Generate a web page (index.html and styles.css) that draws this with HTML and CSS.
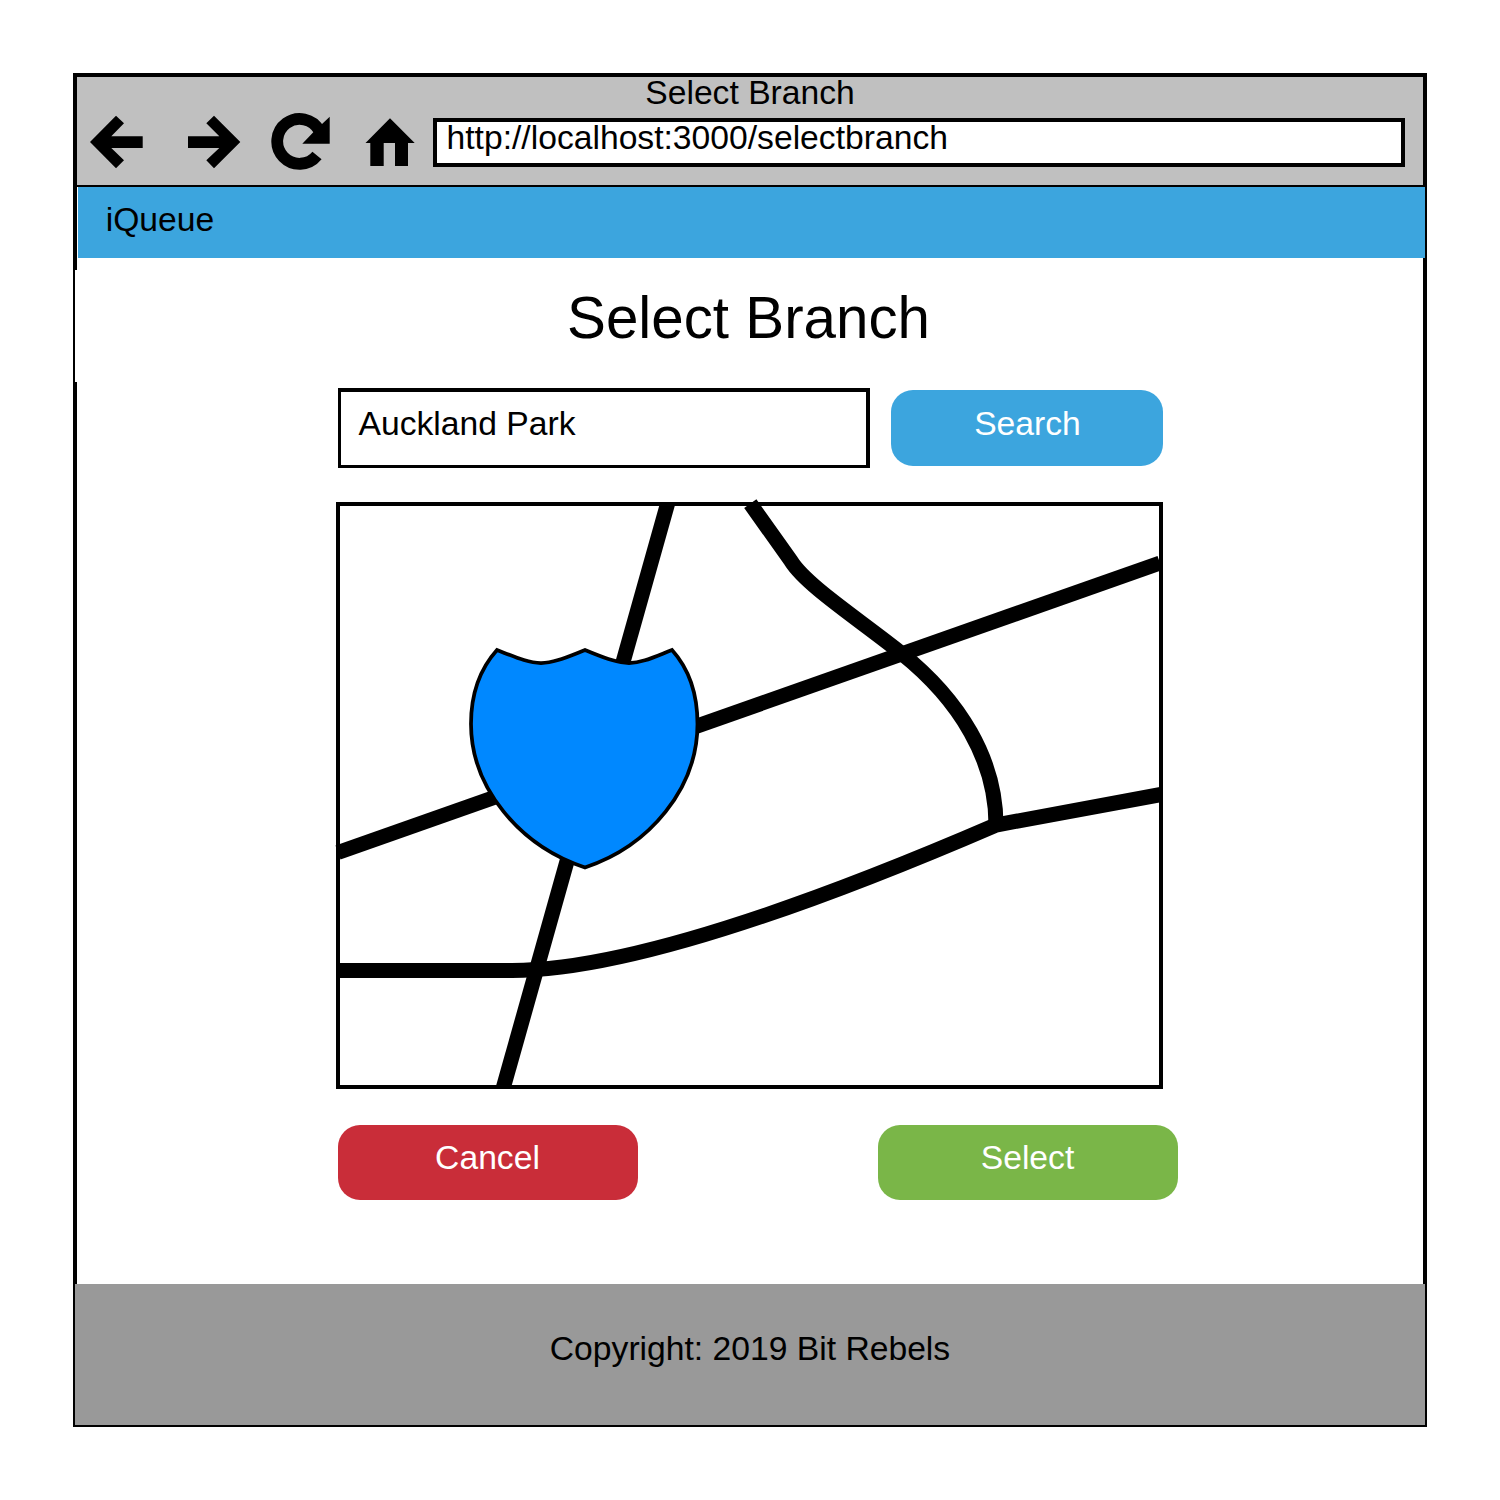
FILE: index.html
```html
<!DOCTYPE html>
<html lang="en">
<head>
<meta charset="utf-8">
<title>Select Branch</title>
<link rel="stylesheet" href="styles.css">
</head>
<body>
<div class="window">
  <header class="chrome">
    <div class="chrome-title">Select Branch</div>
    <div class="toolbar">
      <svg class="icon" width="60" height="60" viewBox="0 0 60 60"><path d="M0 30L26 3.7L34 11.3L21.3 24.3H52.7V36H21.3L34 48.3L26 56.3Z"/></svg>
      <svg class="icon" width="60" height="60" viewBox="0 0 60 60"><path d="M52.3 30L26 3.7L18.3 11.3L31.3 24.3H0V36H31.3L18.3 48.3L26 56.3Z"/></svg>
      <svg class="icon" width="60" height="60" viewBox="0 0 60 60"><path class="ring" d="M48.2 18.5A22.4 22.4 0 1 0 46 43.5"/><path d="M58.7 4.7V31.7H31.3L42.3 20.3L50.5 12.6Z"/></svg>
      <svg class="icon" width="60" height="60" viewBox="0 0 60 60"><path d="M25 6.3L49.7 31H43V54H30V31H18.7V54H5.3V31H0.5Z"/></svg>
      <div class="url">http://localhost:3000/selectbranch</div>
    </div>
  </header>
  <nav class="navbar"><span class="brand">iQueue</span></nav>
  <main class="content">
    <h1 class="heading">Select Branch</h1>
    <div class="search-row">
      <div class="field">Auckland Park</div>
      <div class="button search">Search</div>
    </div>
    <svg class="map" width="827" height="587" viewBox="336 502 827 587">
      <rect class="frame" x="338" y="504" width="823" height="583"/>
      <path class="road" d="M667.5 504L503.5 1087"/>
      <path class="road" d="M338 852.5L1160 563"/>
      <path class="road" d="M338 970.5H512C640 970.5 850 888 996 825L1161 794.5"/>
      <path class="road" d="M750.3 503.7L791 561C806 585 857 618 901 653C960 700 996 760 996 825"/>
      <path class="shield" d="M497 650C515 657 528 663 541 663C554 663 567 657 585 650C603 657 616 663 629 663C642 663 654 657 672 650C690 670 697.5 697 697.5 724C697.5 788 650 846 585 867.5C520 846 471 788 471 724C471 697 479 670 497 650Z"/>
    </svg>
    <div class="actions">
      <div class="button cancel">Cancel</div>
      <div class="button select">Select</div>
    </div>
  </main>
  <footer class="footer">Copyright: 2019 Bit Rebels</footer>
</div>
</body>
</html>
```
FILE: styles.css
```css
* { box-sizing: border-box; }

body {
  margin: 0;
  padding: 73px;
  background: #fff;
  color: #000;
  font: 33.67px/40px "Liberation Sans", Arial, sans-serif;
}

.window {
  width: 1354px;
  height: 1354px;
  display: flex;
  flex-direction: column;
}

.chrome {
  height: 114px;
  border: 4px solid #000;
  border-bottom-width: 2px;
  background: #c0c0c0;
}

.chrome-title {
  height: 30px;
  line-height: 32px;
  text-align: center;
}

.toolbar {
  display: grid;
  grid-template-columns: 98px 83px 94px 68px 972px;
  align-items: start;
  padding: 5px 0 0 13px;
}

.icon { display: block; }

.ring {
  fill: none;
  stroke: #000;
  stroke-width: 11.8;
}

.url {
  height: 49px;
  margin-top: 6px;
  padding-left: 9.5px;
  border: 4px solid #000;
  background: #fff;
  line-height: 32px;
}

.navbar {
  height: 71px;
  padding-left: 1px;
  border-left: 4px solid #000;
  border-right: 2px solid #000;
  background-color: #3ca5de;
  background-clip: content-box;
}

.brand {
  display: block;
  height: 71px;
  padding: 13px 0 0 27.7px;
}

.content {
  height: 1026px;
  padding-top: 12px;
  border: solid #000;
  border-width: 0 4px;
}

.heading {
  height: 112px;
  margin: 0 0 0 -2px;
  padding: 15px 1px 0 0;
  background: #fff;
  font-size: 58.3px;
  font-weight: normal;
  line-height: 66px;
  text-align: center;
}

.search-row {
  display: flex;
  align-items: center;
  gap: 21px;
  margin: 6px 0 34px 261px;
}

.field {
  width: 532px;
  height: 80px;
  padding: 12px 0 0 17.5px;
  border: solid #000;
  border-width: 4px 4px 3px 3px;
}

.button {
  border-radius: 22px;
  color: #fff;
  text-align: center;
}

.search {
  width: 272px;
  height: 76px;
  padding: 14px 0 0 1px;
  background: #3ca5de;
}

.map {
  display: block;
  margin-left: 259px;
  overflow: visible;
}

.frame {
  fill: #fff;
  stroke: #000;
  stroke-width: 4;
}

.road {
  fill: none;
  stroke: #000;
  stroke-width: 15;
}

.shield {
  fill: #08f;
  stroke: #000;
  stroke-width: 3.75;
}

.actions {
  display: flex;
  gap: 240px;
  margin: 36px 0 0 261px;
}

.cancel,
.select {
  width: 300px;
  height: 75px;
  padding: 13px 1px 0 0;
}

.cancel { background: #c92d39; }

.select { background: #7ab648; }

.footer {
  height: 143px;
  padding-top: 45px;
  border: solid #000;
  border-width: 0 2px 2px;
  background: #999;
  text-align: center;
}
```
